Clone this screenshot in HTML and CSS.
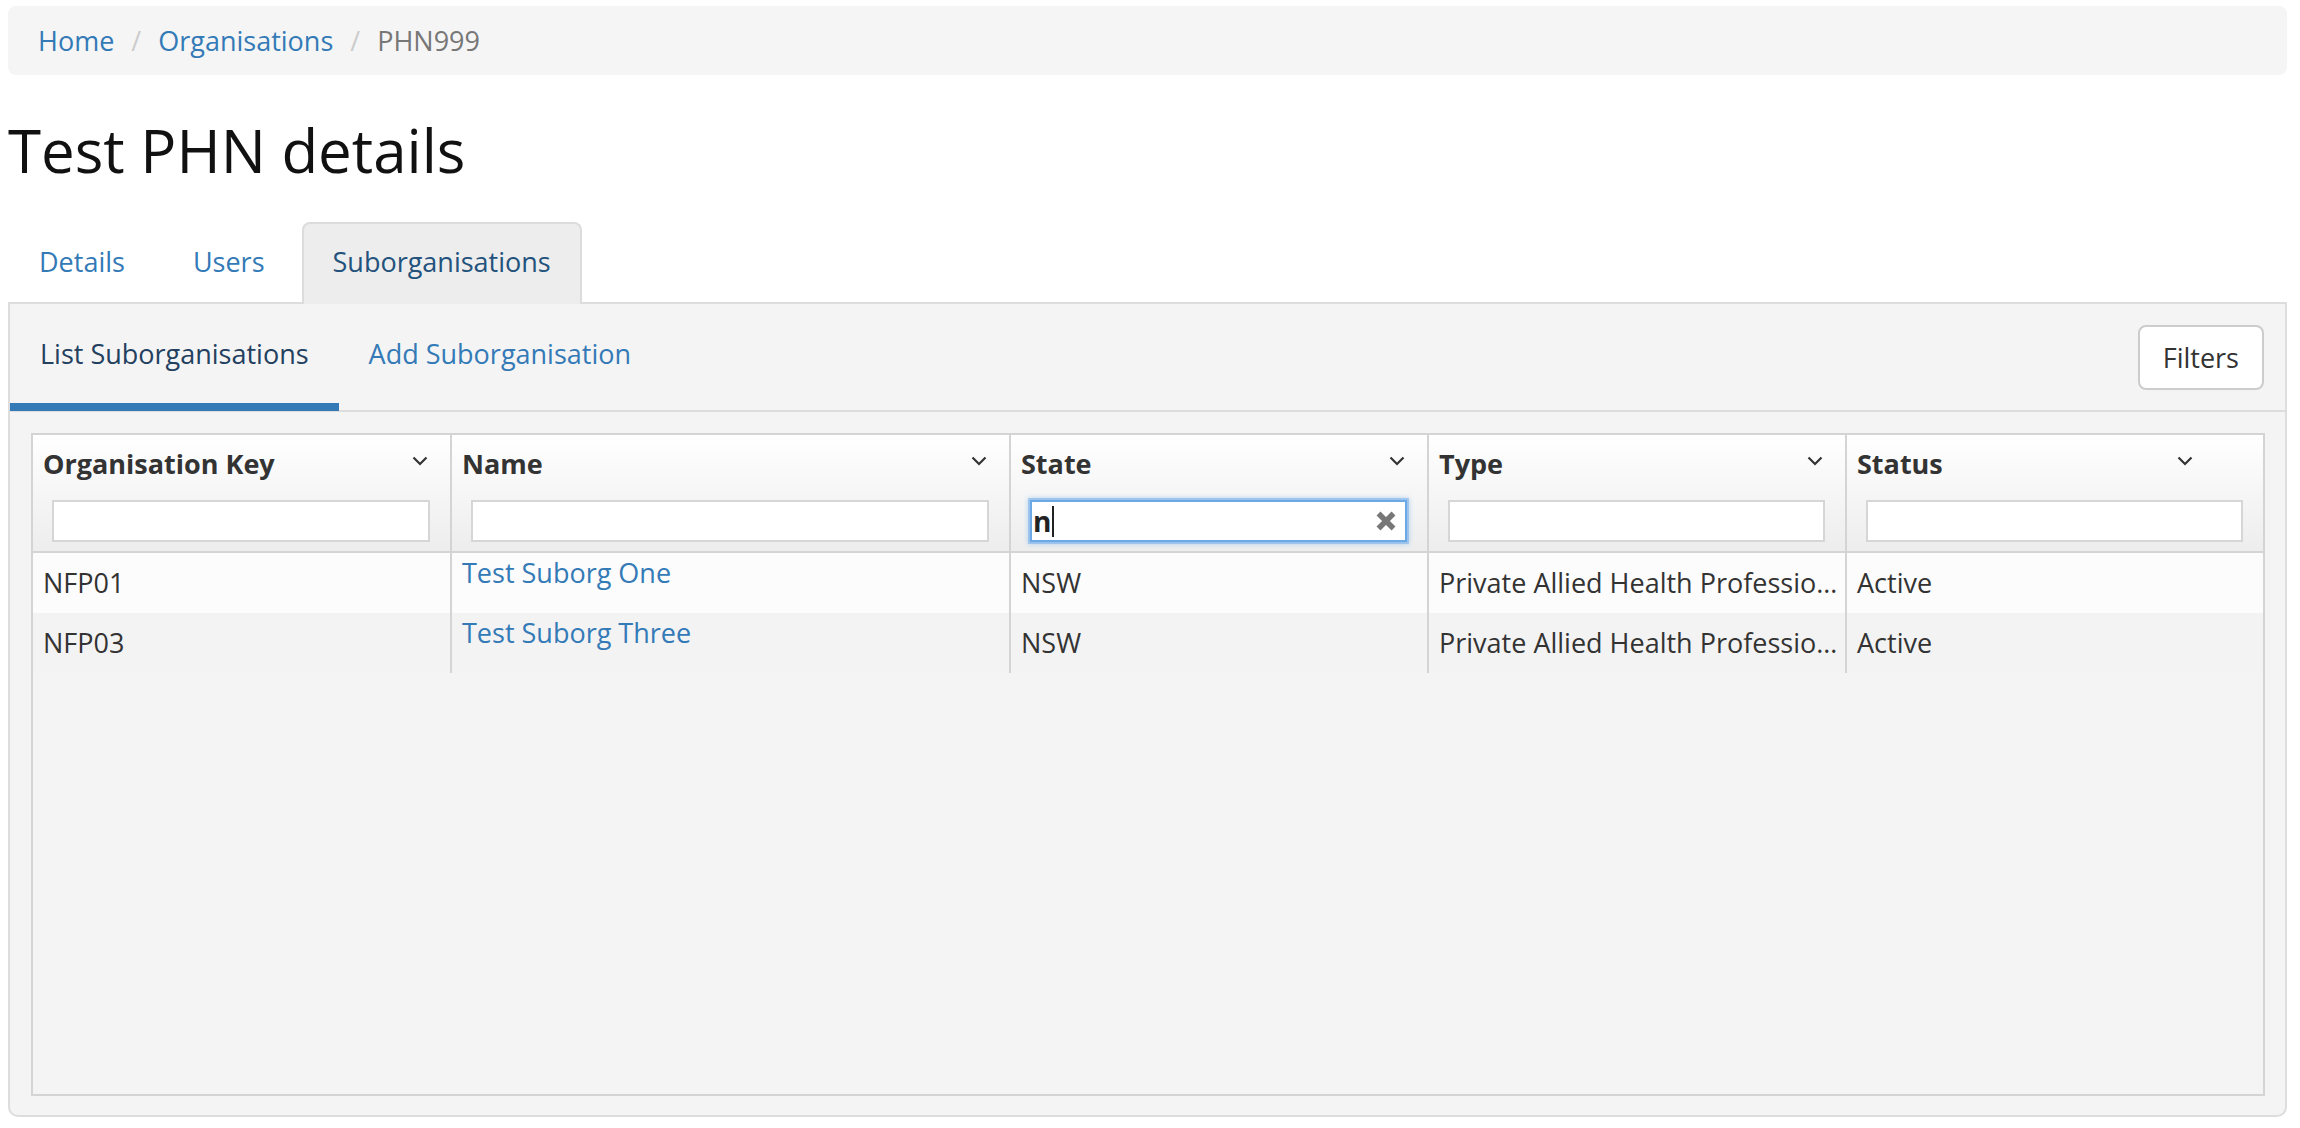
FILE: index.html
```html
<!DOCTYPE html>
<html lang="en">
<head>
<meta charset="utf-8">
<title>Test PHN details</title>
<link rel="stylesheet" href="styles.css">
</head>
<body>
<div class="page">
  <ol class="breadcrumb">
    <li><a href="#">Home</a></li>
    <li><a href="#">Organisations</a></li>
    <li class="active">PHN999</li>
  </ol>

  <h1 class="title">Test PHN details</h1>

  <ul class="tabs">
    <li class="tab"><a href="#">Details</a></li>
    <li class="tab"><a href="#">Users</a></li>
    <li class="tab active"><a href="#">Suborganisations</a></li>
  </ul>

  <div class="panel">
    <div class="subnav">
      <a class="subtab active" href="#">List Suborganisations</a>
      <a class="subtab" href="#">Add Suborganisation</a>
      <button class="btn" type="button">Filters</button>
    </div>

    <div class="grid">
      <div class="grid-header">
        <div class="hcell">
          <div class="htop"><span class="htitle">Organisation Key</span>
            <svg class="chev" viewBox="0 0 16 10" width="16" height="10"><polyline points="1.5,1.5 8,8 14.5,1.5" fill="none" stroke="#333" stroke-width="2.2"/></svg>
          </div>
          <div class="filter"><div class="input"></div></div>
        </div>
        <div class="hcell">
          <div class="htop"><span class="htitle">Name</span>
            <svg class="chev" viewBox="0 0 16 10" width="16" height="10"><polyline points="1.5,1.5 8,8 14.5,1.5" fill="none" stroke="#333" stroke-width="2.2"/></svg>
          </div>
          <div class="filter"><div class="input"></div></div>
        </div>
        <div class="hcell">
          <div class="htop"><span class="htitle">State</span>
            <svg class="chev" viewBox="0 0 16 10" width="16" height="10"><polyline points="1.5,1.5 8,8 14.5,1.5" fill="none" stroke="#333" stroke-width="2.2"/></svg>
          </div>
          <div class="filter">
            <div class="input focus">
              <span class="typed">n</span><span class="caret"></span>
              <svg class="clear" viewBox="0 0 20 20" width="20" height="20"><path d="M2.5 2.5 L17.5 17.5 M17.5 2.5 L2.5 17.5" stroke="#777" stroke-width="5.5"/></svg>
            </div>
          </div>
        </div>
        <div class="hcell">
          <div class="htop"><span class="htitle">Type</span>
            <svg class="chev" viewBox="0 0 16 10" width="16" height="10"><polyline points="1.5,1.5 8,8 14.5,1.5" fill="none" stroke="#333" stroke-width="2.2"/></svg>
          </div>
          <div class="filter"><div class="input"></div></div>
        </div>
        <div class="hcell last">
          <div class="htop"><span class="htitle">Status</span>
            <svg class="chev" viewBox="0 0 16 10" width="16" height="10"><polyline points="1.5,1.5 8,8 14.5,1.5" fill="none" stroke="#333" stroke-width="2.2"/></svg>
          </div>
          <div class="filter"><div class="input"></div></div>
        </div>
      </div>

      <div class="row odd">
        <div class="cell">NFP01</div>
        <div class="cell link"><a href="#">Test Suborg One</a></div>
        <div class="cell">NSW</div>
        <div class="cell clip">Private Allied Health Professional</div>
        <div class="cell last">Active</div>
      </div>
      <div class="row even">
        <div class="cell">NFP03</div>
        <div class="cell link"><a href="#">Test Suborg Three</a></div>
        <div class="cell">NSW</div>
        <div class="cell clip">Private Allied Health Professional</div>
        <div class="cell last">Active</div>
      </div>
    </div>
  </div>
</div>
</body>
</html>
```

FILE: styles.css
```css
html, body {
  margin: 0;
  padding: 0;
  background: #fff;
}

body {
  font-family: "Open Sans", "Liberation Sans", Arial, sans-serif;
  font-size: 27px;
  color: #333;
}

a {
  color: #337ab7;
  text-decoration: none;
}

.page {
  margin-left: 8px;
  width: 2279px;
  padding-top: 6px;
}

/* Breadcrumb */
.breadcrumb {
  list-style: none;
  margin: 0;
  padding: 14px 30px;
  height: 69px;
  box-sizing: border-box;
  background: #f5f5f5;
  border-radius: 8px;
  display: flex;
  font-size: 27px;
  line-height: 41px;
}

.breadcrumb li + li::before {
  content: "/";
  color: #ccc;
  padding: 0 17px;
}

.breadcrumb .active {
  color: #777;
}

/* Title */
.title {
  font-size: 60px;
  font-weight: 400;
  line-height: 66px;
  margin: 42px 0 39px;
  color: #111;
}

/* Tabs */
.tabs {
  list-style: none;
  margin: 0;
  padding: 0;
  display: flex;
  position: relative;
  z-index: 1;
}

.tab {
  margin-right: 6px;
  margin-bottom: -2px;
}

.tab a {
  display: block;
  padding: 18px 29px 22px;
  line-height: 40px;
  border: 2px solid transparent;
  border-bottom: 0;
  border-radius: 8px 8px 0 0;
}

.tab.active a {
  background: #ededed;
  border-color: #dcdcdc;
  color: #23527c;
}

/* Panel */
.panel {
  border: 2px solid #ddd;
  border-radius: 0 0 10px 10px;
  background: #f4f4f4;
}

.subnav {
  display: flex;
  align-items: flex-start;
  height: 108px;
  box-sizing: border-box;
  border-bottom: 2px solid #ddd;
}

.subtab {
  display: block;
  box-sizing: border-box;
  height: 107px;
  padding: 30px 30px 0;
  line-height: 40px;
}

.subtab.active {
  border-bottom: 8px solid #337ab7;
  color: #23405f;
}

.btn {
  margin-left: auto;
  margin-right: 21px;
  align-self: center;
  font-family: inherit;
  font-size: 27px;
  line-height: 61px;
  padding: 0 23px;
  border: 2px solid #ccc;
  border-radius: 8px;
  background: #fff;
  color: #333;
}

/* Grid */
.grid {
  --cols: 419px 559px 418px 418px 1fr;
  margin: 21px 20px 19px 21px;
  height: 663px;
  box-sizing: border-box;
  border: 2px solid #d4d4d4;
  background: #f4f4f4;
}

.grid-header {
  display: grid;
  grid-template-columns: var(--cols);
  background: linear-gradient(#ffffff, #ededed);
  border-bottom: 2px solid #d4d4d4;
}

.hcell {
  box-sizing: border-box;
  border-right: 2px solid #d4d4d4;
}

.hcell.last {
  border-right: 0;
}

.htop {
  display: flex;
  justify-content: space-between;
  align-items: flex-start;
  height: 65px;
  box-sizing: border-box;
  padding: 9px 22px 0 10px;
}

.hcell.last .htop {
  padding-right: 70px;
}

.htitle {
  font-weight: 700;
  line-height: 40px;
  color: #333;
}

.chev {
  margin-top: 12px;
  display: block;
}

.filter {
  padding: 0 20px 9px 19px;
}

.input {
  height: 42px;
  box-sizing: border-box;
  border: 2px solid #d6d6d6;
  background: #fff;
  display: flex;
  align-items: center;
}

.input.focus {
  border-color: #6aa9e6;
  box-shadow: 0 0 0 2px rgba(120, 175, 235, 0.55), 0 0 5px 2px rgba(102, 175, 233, 0.45);
  padding-left: 1px;
}

.typed {
  font-size: 28px;
  font-weight: 700;
  color: #222;
  line-height: 38px;
}

.caret {
  width: 2px;
  height: 31px;
  background: #222;
  margin-left: 1px;
}

.clear {
  margin-left: auto;
  margin-right: 9px;
  display: block;
}

.row {
  display: grid;
  grid-template-columns: var(--cols);
  height: 60px;
}

.row.odd {
  background: #fcfcfc;
}

.row.even {
  background: #f3f3f3;
}

.cell {
  box-sizing: border-box;
  border-right: 2px solid #d4d4d4;
  padding: 10px 10px 0;
  line-height: 40px;
  white-space: nowrap;
  overflow: hidden;
  text-overflow: ellipsis;
  color: #333;
}

.cell.clip {
  padding-right: 3px;
}

.cell.last {
  border-right: 0;
}

.cell.link {
  padding-top: 0;
}
```
